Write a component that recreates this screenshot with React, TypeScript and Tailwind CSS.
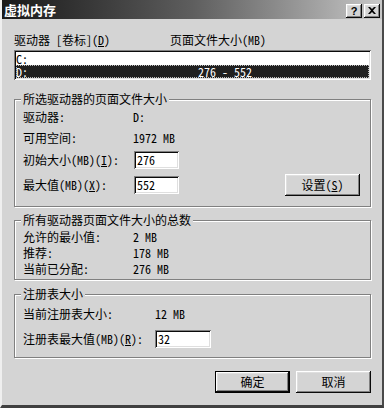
import React from "react";

const raised =
  "shadow-[inset_-1px_-1px_0_#0a0a0a,inset_1px_1px_0_#ffffff,inset_-2px_-2px_0_#808080,inset_2px_2px_0_#dfdfdf]";
const sunken =
  "shadow-[inset_1px_1px_0_#808080,inset_-1px_-1px_0_#ffffff,inset_2px_2px_0_#0a0a0a,inset_-2px_-2px_0_#dfdfdf]";
const group =
  "w-[357px] border border-[#808080] shadow-[inset_1px_1px_0_#ffffff,1px_1px_0_#ffffff] px-[8px]";
const legend = "ml-[-2px] px-[2px] bg-[#d4d4d4] text-[12px] leading-[14px]";

function Input({ value, w }: { value: string; w: string }) {
  return (
    <div className={`${w} h-[18px] bg-white ${sunken} flex items-center pl-[3px]`}>
      {value}
    </div>
  );
}

export default function App() {
  return (
    <div className="w-[384px] h-[408px] bg-[#d4d4d4] text-black text-[12px] leading-[14px] font-['Noto_Sans_Mono_CJK_SC','Noto_Sans_CJK_SC',monospace] flex flex-col border-l-2 border-l-[#efefef] border-r-2 border-r-[#4a4a4a] border-b-[3px] border-b-[#404040] overflow-hidden">
      {/* title bar */}
      <div className="h-[19px] shrink-0 flex items-center justify-between bg-gradient-to-r from-[#1a1a1a] via-[#5e5e5e] to-[#c8c8c8] pl-[2px] pr-[2px]">
        <span className="font-bold text-white text-[13px] leading-[15px] font-['Noto_Sans_CJK_SC',sans-serif]">
          虚拟内存
        </span>
        <div className="flex gap-[2px] mt-[2px]">
          <div className={`w-[16px] h-[14px] bg-[#d4d4d4] ${raised} flex items-center justify-center text-[11px] leading-[12px] font-bold font-['Liberation_Sans',sans-serif]`}>
            ?
          </div>
          <div className={`w-[16px] h-[14px] bg-[#d4d4d4] ${raised} flex items-center justify-center`}>
            <svg width="8" height="7" viewBox="0 0 8 7">
              <path d="M0 0h2l2 2 2-2h2L5 3.5 8 7H6L4 5 2 7H0l3-3.5z" fill="#000" />
            </svg>
          </div>
        </div>
      </div>

      <div className="pl-[12px] flex flex-col">
        {/* header */}
        <div className="mt-[14px] h-[14px] flex items-center">
          <span className="w-[156px]">
            驱动器 [卷标](<u>D</u>)
          </span>
          <span>页面文件大小(MB)</span>
        </div>

        {/* list box */}
        <div className={`mt-[3px] w-[357px] h-[30px] bg-white ${sunken} p-[2px] leading-[13px]`}>
          <div className="h-[13px] flex items-center">C:</div>
          <div className="h-[13px] flex items-center bg-[#202020] text-white outline-1 outline-dotted outline-[#bbbbbb] -outline-offset-1">
            <span className="w-[182px]">D:</span>
            <span>276 - 552</span>
          </div>
        </div>

        {/* group 1 */}
        <fieldset className={`mt-[12px] ${group} pb-[10px]`}>
          <legend className={legend}>所选驱动器的页面文件大小</legend>
          <div className="mt-[4px] h-[14px] flex items-center">
            <span className="w-[110px]">驱动器:</span>
            <span>D:</span>
          </div>
          <div className="mt-[7px] h-[14px] flex items-center">
            <span className="w-[110px]">可用空间:</span>
            <span>1972 MB</span>
          </div>
          <div className="mt-[6px] h-[18px] flex items-center">
            <span className="w-[111px]">
              初始大小(MB)(<u>I</u>):
            </span>
            <Input value="276" w="w-[45px]" />
          </div>
          <div className="mt-[5px] h-[22px] flex items-center">
            <span className="w-[111px]">
              最大值(MB)(<u>X</u>):
            </span>
            <Input value="552" w="w-[45px]" />
            <div className={`ml-[106px] w-[75px] h-[22px] ${raised} flex items-center justify-center`}>
              设置(<u>S</u>)
            </div>
          </div>
        </fieldset>

        {/* group 2 */}
        <fieldset className={`mt-[6px] ${group} pb-[2px]`}>
          <legend className={legend}>所有驱动器页面文件大小的总数</legend>
          <div className="mt-[2px] h-[16px] flex items-center">
            <span className="w-[110px]">允许的最小值:</span>
            <span>2 MB</span>
          </div>
          <div className="h-[16px] flex items-center">
            <span className="w-[110px]">推荐:</span>
            <span>178 MB</span>
          </div>
          <div className="h-[16px] flex items-center">
            <span className="w-[110px]">当前已分配:</span>
            <span>276 MB</span>
          </div>
        </fieldset>

        {/* group 3 */}
        <fieldset className={`mt-[7px] ${group} pb-[9px]`}>
          <legend className={legend}>注册表大小</legend>
          <div className="mt-[5px] h-[16px] flex items-center">
            <span className="w-[132px]">当前注册表大小:</span>
            <span>12 MB</span>
          </div>
          <div className="mt-[8px] h-[18px] flex items-center">
            <span className="w-[132px]">
              注册表最大值(MB)(<u>R</u>):
            </span>
            <Input value="32" w="w-[56px]" />
          </div>
        </fieldset>

        {/* buttons */}
        <div className="mt-[13px] w-[357px] flex justify-end gap-[6px]">
          <div className="w-[75px] h-[22px] border border-black">
            <div className={`w-full h-full ${raised} flex items-center justify-center`}>确定</div>
          </div>
          <div className={`w-[75px] h-[22px] ${raised} flex items-center justify-center`}>取消</div>
        </div>
      </div>
    </div>
  );
}
